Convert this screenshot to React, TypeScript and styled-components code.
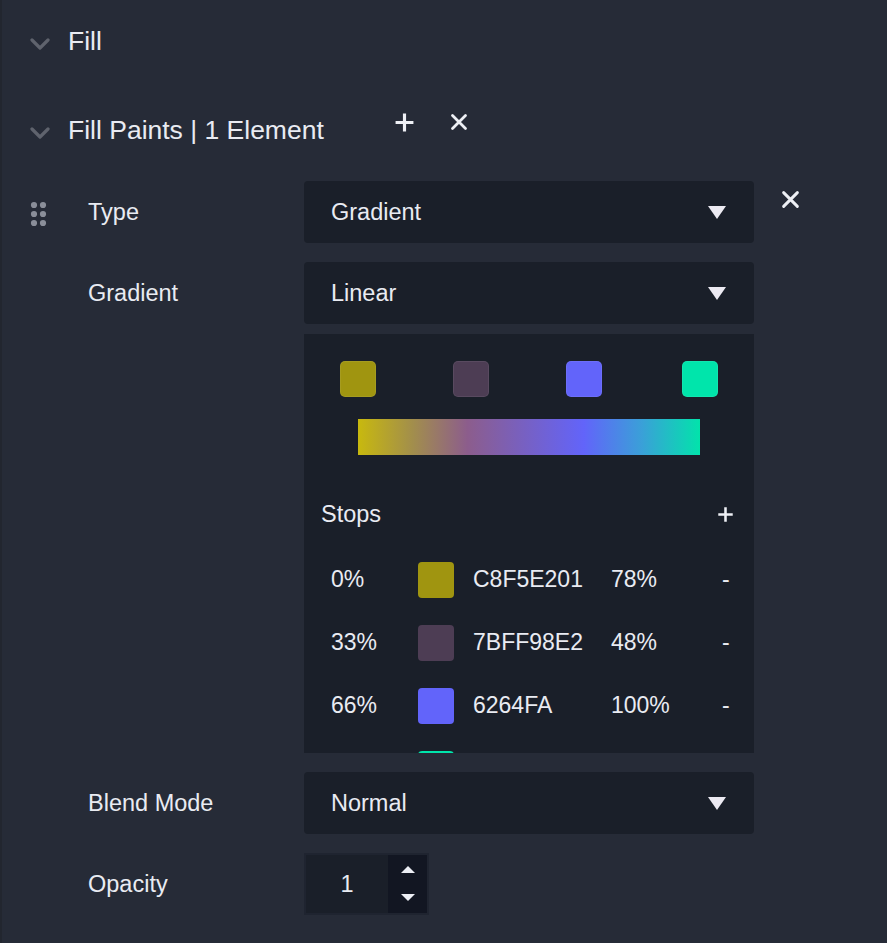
import React from "react";
import styled, { createGlobalStyle } from "styled-components";

const GlobalStyle = createGlobalStyle`
  html, body {
    margin: 0;
    padding: 0;
    background: #262b37;
  }
  body {
    font-family: "Liberation Sans", Arial, sans-serif;
    color: #e9ebf2;
  }
`;

const Page = styled.div`
  min-height: 943px;
  box-sizing: border-box;
  border-left: 2px solid #22262f;
  padding-top: 16px;
`;

const Header = styled.div<{ $top: number }>`
  display: flex;
  align-items: center;
  height: 50px;
  margin-top: ${(p) => p.$top}px;
  padding-left: 28px;
`;

const Chevron = styled.svg`
  width: 20px;
  height: 14px;
  margin-top: 6px;
  margin-right: 18px;
  flex: none;
`;

const HeaderTitle = styled.span<{ $size: number }>`
  font-size: ${(p) => p.$size}px;
  white-space: nowrap;
`;

const HeaderActions = styled.div`
  display: flex;
  align-items: center;
  gap: 35px;
  margin-left: 70px;
  margin-bottom: 16px;
`;

const IconButton = styled.button`
  background: none;
  border: 0;
  padding: 0;
  margin: 0;
  display: flex;
  color: #eef0f5;
  cursor: pointer;
`;

const PaintGrid = styled.div`
  display: grid;
  grid-template-columns: 86px 216px 450px auto;
  margin-top: 26px;
  row-gap: 19px;
  align-items: center;
`;

const HandleCell = styled.div`
  padding-left: 28px;
  display: flex;
  align-items: center;
  height: 100%;
  padding-top: 4px;
  box-sizing: border-box;
`;

const Label = styled.div`
  font-size: 23.5px;
  color: #e9ebf2;
  white-space: nowrap;
`;

const Select = styled.div`
  height: 62px;
  background: #1a1f29;
  border-radius: 4px;
  display: flex;
  align-items: center;
  justify-content: space-between;
  padding: 0 28px 0 27px;
  box-sizing: border-box;
  font-size: 23.5px;
`;

const Caret = styled.span`
  width: 0;
  height: 0;
  border-left: 9px solid transparent;
  border-right: 9px solid transparent;
  border-top: 13px solid #eceaf2;
`;

const CloseCell = styled.div`
  align-self: start;
  padding-left: 27px;
  padding-top: 9px;
`;

const Editor = styled.div`
  grid-column: 3;
  margin-top: -9px;
  height: 419px;
  overflow: hidden;
  background: #1a1f29;
`;

const Track = styled.div`
  position: relative;
  margin: 27px 54px 0;
  height: 36px;
`;

const Marker = styled.div<{ $color: string }>`
  position: absolute;
  top: 0;
  width: 36px;
  height: 36px;
  margin-left: -18px;
  box-sizing: border-box;
  border-radius: 5px;
  background: ${(p) => p.$color};
  border: 1px solid rgba(255, 255, 255, 0.07);
`;

const Bar = styled.div`
  margin: 22px 54px 0;
  height: 36px;
  background: linear-gradient(
    to right,
    #c8b90e 0%,
    #a28e4c 16%,
    #8c5d8c 32%,
    #6264fa 66%,
    #3aa0d8 83%,
    #02e3ab 100%
  );
`;

const StopsHeader = styled.div`
  display: flex;
  align-items: center;
  justify-content: space-between;
  height: 36px;
  margin-top: 41px;
  padding: 0 20px 0 17px;
  font-size: 23.5px;
`;

const StopList = styled.div`
  margin-top: 16px;
`;

const StopRow = styled.div`
  display: grid;
  grid-template-columns: 87px 55px 138px 111px auto;
  align-items: center;
  height: 63px;
  padding-left: 27px;
  font-size: 23px;
`;

const Swatch = styled.div<{ $color: string }>`
  width: 36px;
  height: 36px;
  border-radius: 4px;
  background: ${(p) => p.$color};
`;

const Minus = styled.span`
  padding-left: 0;
`;

const NumberBox = styled.div`
  display: flex;
  width: 125px;
  height: 62px;
  box-sizing: border-box;
  border: 2px solid #1f2430;
  background: #1a1f29;
`;

const NumberValue = styled.div`
  width: 82px;
  display: flex;
  align-items: center;
  justify-content: center;
  font-size: 23.5px;
`;

const Spinner = styled.div`
  flex: 1;
  background: #121622;
  display: flex;
  flex-direction: column;
  align-items: center;
  justify-content: space-between;
  padding: 11px 0 12px;
`;

const Tri = styled.span<{ $up?: boolean }>`
  width: 0;
  height: 0;
  border-left: 7px solid transparent;
  border-right: 7px solid transparent;
  ${(p) =>
    p.$up
      ? "border-bottom: 7px solid #eceef4;"
      : "border-top: 7px solid #eceef4;"}
`;

const ChevronIcon = () => (
  <Chevron viewBox="0 0 20 14">
    <path
      d="M2 3 L10 11 L18 3"
      fill="none"
      stroke="#5f636d"
      strokeWidth="3.2"
      strokeLinecap="round"
      strokeLinejoin="round"
    />
  </Chevron>
);

const PlusIcon = ({ size }: { size: number }) => (
  <svg width={size} height={size} viewBox="0 0 20 20">
    <path
      d="M10 1.5 V18.5 M1.5 10 H18.5"
      stroke="#eef0f5"
      strokeWidth="3"
      strokeLinecap="butt"
    />
  </svg>
);

const CloseIcon = ({ size }: { size: number }) => (
  <svg width={size} height={size} viewBox="0 0 18 18">
    <path
      d="M2.5 2.5 L15.5 15.5 M15.5 2.5 L2.5 15.5"
      stroke="#eef0f5"
      strokeWidth="2.8"
      strokeLinecap="round"
    />
  </svg>
);

const DragHandle = () => (
  <svg width="18" height="26" viewBox="0 0 18 26">
    {[4, 13, 22].map((cy) =>
      [4, 13].map((cx) => (
        <circle key={`${cx}-${cy}`} cx={cx} cy={cy} r="3.1" fill="#8a8e99" />
      ))
    )}
  </svg>
);

const markers = [
  { pct: 0, color: "#a09510" },
  { pct: 33, color: "#4d3d54" },
  { pct: 66, color: "#6264fa" },
  { pct: 100, color: "#00e5ab" },
];

const stops = [
  { pos: "0%", color: "#a09510", hex: "C8F5E201", op: "78%" },
  { pos: "33%", color: "#4d3d54", hex: "7BFF98E2", op: "48%" },
  { pos: "66%", color: "#6264fa", hex: "6264FA", op: "100%" },
];

export default function App() {
  return (
    <>
      <GlobalStyle />
      <Page>
        <Header $top={0}>
          <ChevronIcon />
          <HeaderTitle $size={26.5}>Fill</HeaderTitle>
        </Header>
        <Header $top={39}>
          <ChevronIcon />
          <HeaderTitle $size={26.5}>Fill Paints | 1 Element</HeaderTitle>
          <HeaderActions>
            <IconButton aria-label="add">
              <PlusIcon size={21} />
            </IconButton>
            <IconButton aria-label="remove">
              <CloseIcon size={18} />
            </IconButton>
          </HeaderActions>
        </Header>

        <PaintGrid>
          <HandleCell>
            <DragHandle />
          </HandleCell>
          <Label>Type</Label>
          <Select>
            <span>Gradient</span>
            <Caret />
          </Select>
          <CloseCell>
            <CloseIcon size={19} />
          </CloseCell>

          <div />
          <Label>Gradient</Label>
          <Select>
            <span>Linear</span>
            <Caret />
          </Select>
          <div />

          <Editor>
            <Track>
              {markers.map((m) => (
                <Marker
                  key={m.pct}
                  $color={m.color}
                  style={{ left: `${m.pct}%` }}
                />
              ))}
            </Track>
            <Bar />
            <StopsHeader>
              <span>Stops</span>
              <PlusIcon size={17} />
            </StopsHeader>
            <StopList>
              {stops.map((s) => (
                <StopRow key={s.pos}>
                  <span>{s.pos}</span>
                  <Swatch $color={s.color} />
                  <span>{s.hex}</span>
                  <span>{s.op}</span>
                  <Minus>-</Minus>
                </StopRow>
              ))}
              <StopRow>
                <span />
                <Swatch $color="#00e5ab" />
              </StopRow>
            </StopList>
          </Editor>
          <div />

          <div />
          <Label>Blend Mode</Label>
          <Select>
            <span>Normal</span>
            <Caret />
          </Select>
          <div />

          <div />
          <Label>Opacity</Label>
          <div>
            <NumberBox>
              <NumberValue>1</NumberValue>
              <Spinner>
                <Tri $up />
                <Tri />
              </Spinner>
            </NumberBox>
          </div>
          <div />
        </PaintGrid>
      </Page>
    </>
  );
}
